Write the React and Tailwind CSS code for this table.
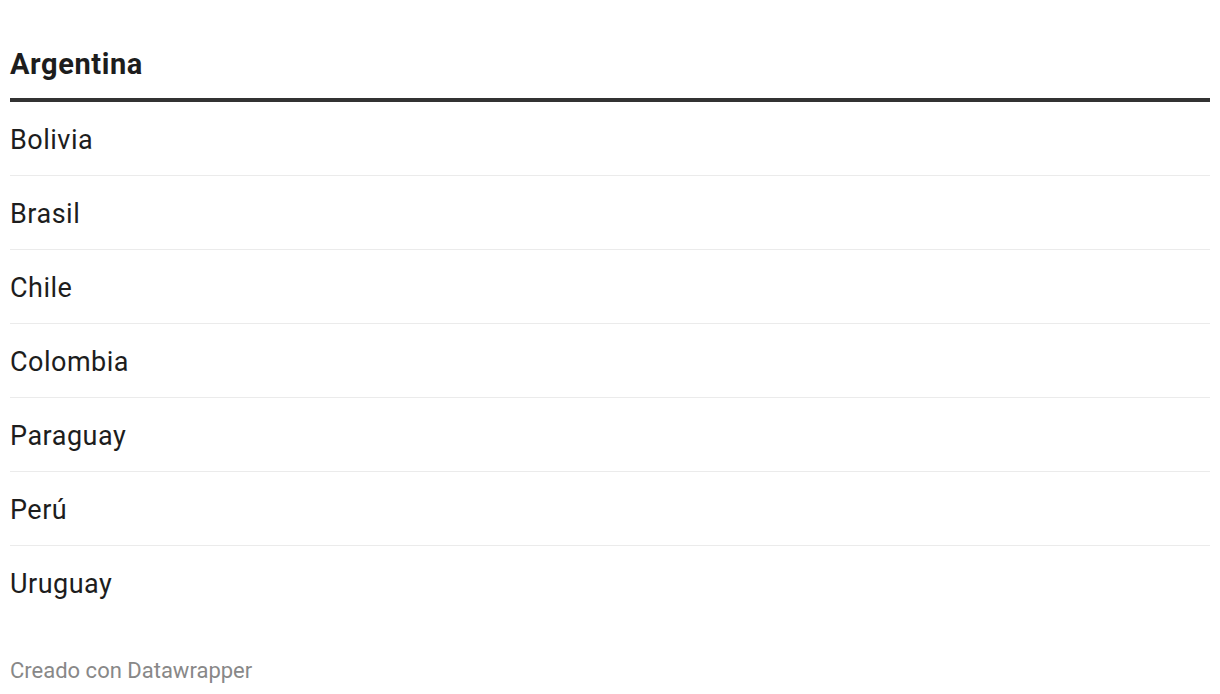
const countries = ['Bolivia', 'Brasil', 'Chile', 'Colombia', 'Paraguay', 'Perú', 'Uruguay'];

export default function App() {
    return (
        <div className="bg-white w-[1220px] h-[694px] px-[10px] text-[#1d1d1d]" style={{ fontFamily: 'Roboto, "Liberation Sans", sans-serif' }}>
            <div className="pt-[44px] pb-[14px] border-b-4 border-[#333333]">
                <h1 className="text-[29px] leading-[40px] font-bold tracking-[0.6px]">Argentina</h1>
            </div>
            <div>
                {countries.map((c, i) => (
                    <div
                        key={c}
                        className={
                            i < countries.length - 1
                                ? 'h-[74px] pt-[3px] flex items-center text-[27px] tracking-[0.5px] border-b border-[#ebebeb]'
                                : 'h-[73px] pt-[3px] flex items-center text-[27px] tracking-[0.5px]'
                        }
                    >
                        {c}
                    </div>
                ))}
            </div>
            <div className="mt-[40px] text-[22px] leading-[24px] text-[#888888]">Creado con Datawrapper</div>
        </div>
    );
}
